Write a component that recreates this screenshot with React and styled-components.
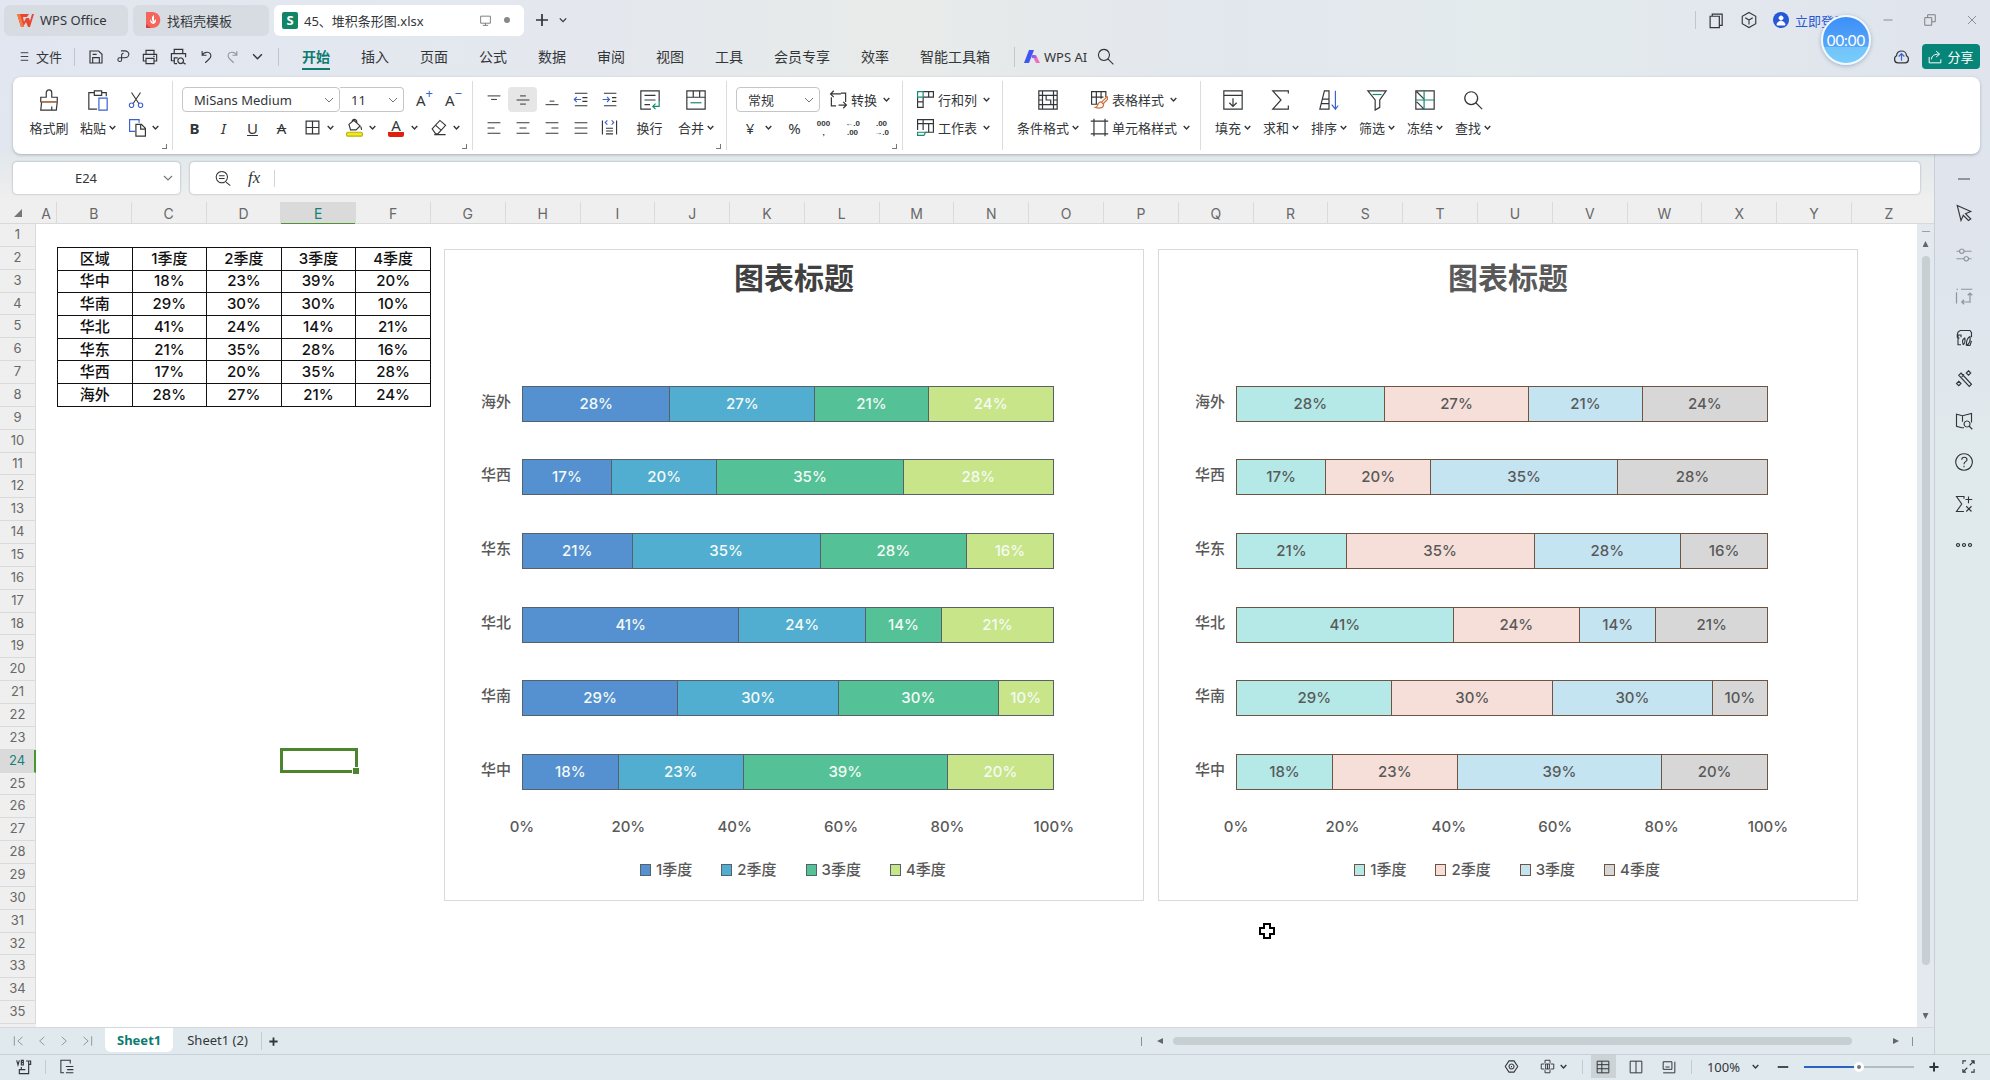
import React, { useState } from 'react'
import styled, { createGlobalStyle, css } from 'styled-components'

const QUARTERS = ['1季度', '2季度', '3季度', '4季度']

const REGIONS = [
  { name: '华中', label: ['18%', '23%', '39%', '20%'], share: [180, 235, 386, 199] },
  { name: '华南', label: ['29%', '30%', '30%', '10%'], share: [293, 303, 301, 103] },
  { name: '华北', label: ['41%', '24%', '14%', '21%'], share: [409, 238, 143, 210] },
  { name: '华东', label: ['21%', '35%', '28%', '16%'], share: [206, 355, 276, 163] },
  { name: '华西', label: ['17%', '20%', '35%', '28%'], share: [167, 198, 352, 283] },
  { name: '海外', label: ['28%', '27%', '21%', '24%'], share: [278, 273, 213, 236] },
]

const BLUE_THEME = {
  fills: ['#5591d1', '#52aed0', '#54c197', '#c8e589'],
  line: '#56616a',
  value: '#f4fbf6',
  title: '#404040',
}
const PASTEL_THEME = {
  fills: ['#b4e9e7', '#f6dfd9', '#c4e4f2', '#d7d7d7'],
  line: '#6f5442',
  value: '#595959',
  title: '#595959',
}

const COLUMNS = 'ABCDEFGHIJKLMNOPQRSTUVWXYZ'.split('')
const ROWS = Array.from({ length: 35 }, (_, i) => i + 1)
const MENUS = ['开始', '插入', '页面', '公式', '数据', '审阅', '视图', '工具', '会员专享', '效率', '智能工具箱']

// every drawing is in a 24 x 24 box
const ICONS = {
  menu: <path d="M5 5h14M5 12h14M5 19h14" />,
  save: <path d="M3 3h13l5 5v13H3zM7 21v-8h10v8M7 8h6" />,
  export: <path d="M8 3h6a6 5 0 0 1 0 11H9v3a3 3 0 1 1-3-3h3V9a3 3 0 0 1 3-2" />,
  print: <path d="M6 8V2h12v6M6 18H2V8h20v10h-4M6 14h12v8H6zM17 11h2" />,
  preview: <path d="M6 8V2h12v6M7 18H2V8h20v5M6 22V14h5M15 14a4 4 0 1 0 .1 0M18 20l4 3M6 22h4" />,
  undo: <path d="M5 3v7h7M5 10c4-7 14-6 14 1 0 4-4 6-9 11" />,
  redo: <path d="M19 3v7h-7M19 10C15 3 5 4 5 11c0 4 4 6 9 11" />,
  search: <path d="M10 3a7 7 0 1 0 .1 0M15 15l7 7" />,
  screen: <path d="M3 4h18v13H3zM12 17v4M7 21h10" />,
  plus: <path d="M12 3v18M3 12h18" />,
  minus: <path d="M3 12h18" />,
  docs: <path d="M3 6h13v16H3zM6 6V3h14v16h-4" />,
  cube: <path d="M12 2l9 5v10l-9 5-9-5V7zM7 9l5 3 5-3M12 12v6" />,
  restore: <path d="M3 8h12v13H3zM8 8V3h13v12h-6" />,
  close: <path d="M4 4l16 16M20 4L4 20" />,
  cloud: (
    <>
      <path d="M7 21C1 21 1 13 5 11c0-9 14-9 14 0 4 2 4 10-2 10z" />
      <path d="M12 18v-9M8 12l4-4 4 4" stroke="#3a62d0" />
    </>
  ),
  share: <path d="M2 12v10h20v-6M6 16c0-6 5-9 13-9M14 2l6 5-6 5" />,
  brush: (
    <>
      <path d="M9 9V4a3 3 0 0 1 6 0v5h6v5H3V9zM4 14L3 23h17l1-9M15 23v-4" />
      <path d="M3 14h18" stroke="#c87941" />
    </>
  ),
  paste: (
    <>
      <path d="M8 4H2v18h9M16 4h5v4M8 2h8v5H8z" />
      <path d="M13 10h9v13h-9z" stroke="#3a62d0" />
    </>
  ),
  cut: (
    <>
      <path d="M6 2l10 15M18 2L8 17" />
      <path d="M6 16a3 3 0 1 0 .1 0M18 16a3 3 0 1 0 .1 0" stroke="#3a62d0" />
    </>
  ),
  copy: (
    <>
      <path d="M9 17H2V2h12v4" stroke="#3a62d0" />
      <path d="M10 8h7l5 5v10H10zM16 8v6h6" />
    </>
  ),
  borders: <path d="M3 3h18v18H3zM12 3v18M3 12h18" />,
  fill: (
    <>
      <path d="M5 8l6-5 8 7-5 5H7zM9 5c0-5 6-4 6 1M20 11l1 4" />
      <rect x="2" y="18" width="20" height="5" rx="2" fill="#f4ea12" stroke="#b9b01a" />
    </>
  ),
  erase: <path d="M3 14L14 2l8 7-11 12H8zM8 9l8 7M6 22h16" />,
  top: <path d="M1 5h22M7 11h10" />,
  middle: <path d="M7 5h10M1 12h22M7 19h10" />,
  bottom: <path d="M8 14h8M1 20h22" />,
  left: <path d="M1 3h22M1 12h12M1 21h22" />,
  center: <path d="M1 3h22M6 12h12M1 21h22" />,
  right: <path d="M1 3h22M11 12h12M1 21h22" />,
  justify: <path d="M1 3h22M1 12h22M1 21h22" />,
  outdent: (
    <>
      <path d="M3 2h20M15 9h8M15 15h8M3 22h20" />
      <path d="M13 12H2M6 8l-4 4 4 4" stroke="#3a62d0" />
    </>
  ),
  indent: (
    <>
      <path d="M3 2h20M16 9h7M16 15h7M3 22h20" />
      <path d="M1 12h11M8 8l4 4-4 4" stroke="#3a62d0" />
    </>
  ),
  spread: (
    <>
      <path d="M2 2v20M22 2v20M7 13h10M7 17h10M7 21h10" />
      <path d="M9 2L6 5l3 3M15 2l3 3-3 3" stroke="#3a62d0" />
    </>
  ),
  wrap: (
    <>
      <path d="M22 13V2H2v20h11M6 7h12M6 12h12M6 17h6" />
      <path d="M22 13v6h-7M18 16l-3 3 3 3" stroke="#178a72" />
    </>
  ),
  merge: (
    <>
      <path d="M2 2h20v20H2zM2 9h20M9 2v7M16 2v7" />
      <path d="M6 15h12" stroke="#178a72" />
    </>
  ),
  convert: <path d="M6 1L2 5l4 4M2 5h13M3 9v11h6M18 23l4-4-4-4M22 19H12M21 15V4h-6" />,
  rowcol: (
    <>
      <path d="M9 2h13v7H9M16 2v7M2 9v13h7V9M2 15h7" />
      <path d="M2 2h7v7H2z" stroke="#178a72" />
    </>
  ),
  sheet: (
    <>
      <path d="M2 15V2h20v16H12M2 7h20M9 2v13M16 7v11" />
      <path d="M2 18h10l-2 4H2z" stroke="#178a72" />
    </>
  ),
  condition: <path d="M2 2h20v20H2zM6 2v20M18 2v20M2 7h4M2 12h4M2 17h4M18 7h4M18 12h4M18 17h4M6 7h12M6 17h12M10 7v5h5v5" />,
  tablestyle: (
    <>
      <path d="M10 18H2V2h18v7M2 9h15M8 2v16M14 2v9" />
      <path d="M22 8l-8 8M22 8v4l-6 6M14 15c-5 0-3 6-7 7 6 2 11 0 10-4z" stroke="#d0703a" />
    </>
  ),
  cellstyle: <path d="M5 1v22M19 1v22M1 4h22M1 20h22" />,
  fillcell: <path d="M2 2h20v20H2zM2 7h20M12 10v9M8 15l4 4 4-4" />,
  sum: <path d="M20 5V2H3l9 10-9 10h17v-4" />,
  sort: (
    <>
      <path d="M2 22L7 2h5v20zM5 11h7M4 16h8" />
      <path d="M19 2v20M15 17l4 5 3-4" stroke="#3a62d0" />
    </>
  ),
  filter: (
    <>
      <path d="M2 2h20l-7 10v8l-5 3V12z" />
      <path d="M7 6h10" stroke="#178a72" />
    </>
  ),
  freeze: (
    <>
      <path d="M2 2h20v20H2zM3 3l8 8M3 14l8 8" />
      <path d="M11 2v20M2 12h20" stroke="#178a72" />
    </>
  ),
  zoomed: <path d="M11 2a8 8 0 1 0 .1 0M17 17l6 5M7 8h8M7 12h8" />,
  pointer: <path d="M3 2l18 8-7 3 7 7-3 2-7-7-3 7z" />,
  sliders: <path d="M2 7h4M12 7h10M9 4a3 3 0 1 0 .1 0M2 17h10M18 17h4M15 14a3 3 0 1 0 .1 0" />,
  crop: <path d="M2 3h2M8 3h15M2 7v15M20 21V8M17 11l3-3 3 3M20 20H9M12 17l-3 3 3 3" />,
  chart: <path d="M8 11V8H3l1-4 3-2h13l2 3v6M4 8v13h4M6 8c-4 0-4 5 0 4M11 21c-2-5 0-8 2-9 1 4 0 7-2 9M15 22c0-8 3-11 5-12 1 6-1 10-5 12M15 22h5l2-6" />,
  magic: <path d="M8 4l14 15-3 3L5 7zM9 9l3-3M18 1l3 3-3 3-3-3zM5 15l3 3-3 3-3-3z" />,
  book: <path d="M9 21L2 19V3l8 2 12-3v12M10 5v8M16 12a4 4 0 1 0 .1 0M19 19l4 4M9 21h3" />,
  help: <path d="M12 1a11 11 0 1 0 .1 0M9 9c0-5 7-4 7 0 0 3-4 2-4 6M12 17v2" />,
  formula: <path d="M12 5V2H2l7 10-7 10h10M18 2v9M14 6h9M15 15l7 7M22 15l-7 7" />,
  more: <path d="M4 10a2 2 0 1 0 .1 0M12 10a2 2 0 1 0 .1 0M20 10a2 2 0 1 0 .1 0" />,
  first: <path d="M4 4v16M18 5l-8 7 8 7" />,
  prev: <path d="M16 5l-8 7 8 7" />,
  next: <path d="M8 5l8 7-8 7" />,
  last: <path d="M20 4v16M6 5l8 7-8 7" />,
  outline: <path d="M18 7V2H3v20h5M11 12h12M13 17h10M11 22h12" />,
  macro: <path d="M1 2l2 7 2-7M8 2h3v7H8zM8 5h3M8 15v-3M15 3h7v5h-3v14H5v-6h9M19 3v5" />,
  eye: <path d="M8 3h8l6 9-6 9H8l-6-9zM12 8a4 4 0 1 0 .1 0M12 11v2" />,
  layout: <path d="M8 7V2h8v5M17 8h5v8h-5M16 17v5H8v-5M7 16H2V8h5M9 8h6v8H9zM12 8v8" />,
  normal: <path d="M2 2h20v20H2zM2 8h20M2 15h20M10 2v20" />,
  pages: <path d="M2 2h20v20H2zM12 2v20" />,
  reading: <path d="M2 3h15v13H2zM22 3v19H2M6 12h7" />,
  full: <path d="M8 3H3v5M16 3h5v5M8 21H3v-5M16 21h5v-5M21 3l-7 7M3 21l7-7" />,
}

const Icon = ({ name, size = 20, weight = 1.7 }) => (
  <Drawing width={size} height={size} viewBox="0 0 24 24" strokeWidth={weight} aria-hidden="true">
    {ICONS[name]}
  </Drawing>
)

const Caret = ({ size = 7, weight = 2 }) => (
  <Drawing width={size} height={size} viewBox="0 0 10 10" strokeWidth={weight} aria-hidden="true">
    <path d="M1 3l4 4 4-4" />
  </Drawing>
)

const BigTool = ({ icon, label, width = 48, caret }) => (
  <BigButton $width={width}>
    <Icon name={icon} size={22} weight={1.3} />
    <Label>
      {label}
      {caret && <Caret />}
    </Label>
  </BigButton>
)

const WideTool = ({ icon, label }) => (
  <WideButton>
    <Icon name={icon} size={19} weight={1.5} />
    <Label>
      {label}
      <Caret />
    </Label>
  </WideButton>
)

const SplitTool = ({ title, children }) => (
  <SplitButton aria-label={title}>
    <SplitFace>{children}</SplitFace>
    <Caret />
  </SplitButton>
)

const Combo = ({ label, value, width, flat }) => (
  <ComboBox $width={width} $flat={flat}>
    <select aria-label={label} defaultValue={value}>
      <option>{value}</option>
    </select>
    <Caret size={10} weight={1} />
  </ComboBox>
)

const StackedChart = ({ theme: look, from, to, left, right }) => (
  <ChartFrame $from={from} $to={to} $left={left} $right={right}>
    <ChartTitle $color={look.title}>图表标题</ChartTitle>
    <Plot>
      {[...REGIONS].reverse().map((region) => (
        <BarRow key={region.name}>
          <Category>{region.name}</Category>
          <Bar $line={look.line}>
            {region.share.map((share, i) => (
              <Segment key={i} $fill={look.fills[i]} $line={look.line} $color={look.value} style={{ flexGrow: share }}>
                {region.label[i]}
              </Segment>
            ))}
          </Bar>
        </BarRow>
      ))}
    </Plot>
    <Axis>
      {['0%', '20%', '40%', '60%', '80%', '100%'].map((tick) => (
        <Tick key={tick}>{tick}</Tick>
      ))}
    </Axis>
    <Legend>
      {QUARTERS.map((quarter, i) => (
        <LegendItem key={quarter}>
          <Swatch $fill={look.fills[i]} $line={look.line} />
          {quarter}
        </LegendItem>
      ))}
    </Legend>
  </ChartFrame>
)

const App = () => {
  const [zoom, setZoom] = useState(50)

  return (
    <Window>
      <GlobalStyle />
      <TitleBar>
        <FileTab $width={124}>
          <svg width="18" height="16" viewBox="0 0 18 16" aria-hidden="true">
            <path d="M1 2h12l-2 3H7l1 5 2-4h3l1 3 2-7h2l-4 13h-2l-2-5-3 5H5z" fill="#e8472f" />
            <path d="M1 2h3l4 13H5z" fill="#f47a3c" />
          </svg>
          WPS Office
        </FileTab>
        <FileTab $width={136}>
          <svg width="16" height="18" viewBox="0 0 16 18" aria-hidden="true">
            <path d="M1 1h6c11 0 11 16 0 16H1z" fill="#f4655c" />
            <path d="M1 13l5 4H1z" fill="#d33f3c" />
            <path d="M5 8c0 7 7 6 6 0l-2 2V4C6 6 7 8 8 12z" fill="#fff" />
          </svg>
          找稻壳模板
        </FileTab>
        <FileTab $width={250} $active>
          <BookMark>S</BookMark>
          <FileName>45、堆积条形图.xlsx</FileName>
          <TabState><Icon name="screen" size={13} /></TabState>
          <Dot />
        </FileTab>
        <PlainButton aria-label="新建" $width={26}><Icon name="plus" size={16} weight={2.6} /></PlainButton>
        <PlainButton aria-label="标签列表" $width={16}><Caret size={8} weight={1.6} /></PlainButton>
        <Spacer />
        <TitleTools>
          <Icon name="docs" size={17} />
          <Icon name="cube" size={18} weight={1.5} />
          <Login href="#login">
            <svg width="17" height="17" viewBox="0 0 17 17" aria-hidden="true">
              <circle cx="8" cy="8" r="8" fill="#2557d6" />
              <path d="M8 4a2 2 0 1 0 .1 0M4 13c0-5 8-5 8 0z" fill="#fff" stroke="#fff" />
            </svg>
            立即登录
          </Login>
        </TitleTools>
        <WindowTools>
          <Icon name="minus" size={12} weight={1.6} />
          <Icon name="restore" size={14} weight={1.6} />
          <Icon name="close" size={12} weight={1.6} />
        </WindowTools>
      </TitleBar>

      <MenuBar>
        <FileMenu><Icon name="menu" size={13} /> 文件</FileMenu>
        <QuickTools>
          <Icon name="save" size={16} />
          <Icon name="export" size={15} />
          <Icon name="print" size={16} />
          <Icon name="preview" size={17} />
          <Icon name="undo" size={15} />
          <Faded><Icon name="redo" size={15} /></Faded>
          <Caret size={11} weight={1.3} />
        </QuickTools>
        <MenuTabs>
          {MENUS.map((menu, i) => (
            <MenuTab key={menu} $active={i === 0}>{menu}</MenuTab>
          ))}
        </MenuTabs>
        <AiButton>
          <svg width="16" height="14" viewBox="0 0 16 14" aria-hidden="true">
            <path d="M5 0h5L5 13H0z" fill="#3f56f0" />
            <path d="M8 5l4 0 4 8h-4z" fill="#f06ec2" />
            <path d="M7 5h4l2 3H8z" fill="#8a63f2" />
          </svg>
          WPS AI
        </AiButton>
        <PlainButton aria-label="搜索" $width={36}><Icon name="search" size={19} weight={1.4} /></PlainButton>
        <Spacer />
        <Icon name="cloud" size={17} />
        <ShareButton><Icon name="share" size={14} /> 分享</ShareButton>
      </MenuBar>

      <Ribbon>
        <Group $width={160} $left={11}>
          <BigTool icon="brush" label="格式刷" width={50} />
          <BigTool icon="paste" label="粘贴" caret />
          <Lines>
            <Line $left={5}><Icon name="cut" size={18} weight={1.5} /></Line>
            <Line $left={3}><SplitTool title="复制"><Icon name="copy" size={19} weight={1.5} /></SplitTool></Line>
          </Lines>
          <Corner />
        </Group>
        <Group $width={300} $left={7}>
          <Lines>
            <Line $left={2}>
              <Combo label="字体" value="MiSans Medium" width={158} />
              <Combo label="字号" value="11" width={64} flat />
              <Line $left={6}>
                <Cell aria-label="增大字号">A<Raised>+</Raised></Cell>
                <Cell aria-label="减小字号">A<Raised>−</Raised></Cell>
              </Line>
            </Line>
            <Line>
              <Cell $bold>B</Cell>
              <Cell $italic>I</Cell>
              <Cell $under>U</Cell>
              <Cell $strike>A</Cell>
              <Line $left={4}>
                <SplitTool title="边框"><Icon name="borders" size={17} /></SplitTool>
                <SplitTool title="填充颜色"><Icon name="fill" size={19} weight={1.5} /></SplitTool>
                <SplitTool title="字体颜色"><FontColor>A</FontColor></SplitTool>
                <SplitTool title="清除"><Icon name="erase" size={17} weight={1.6} /></SplitTool>
              </Line>
            </Line>
          </Lines>
          <Corner />
        </Group>
        <Group $width={254} $left={6}>
          <Lines>
            <Line>
              <Cell aria-label="顶端对齐"><Icon name="top" size={14} /></Cell>
              <Cell aria-label="垂直居中" $on><Icon name="middle" size={14} /></Cell>
              <Cell aria-label="底端对齐"><Icon name="bottom" size={14} /></Cell>
              <Cell aria-label="减少缩进"><Icon name="outdent" size={15} /></Cell>
              <Cell aria-label="增加缩进"><Icon name="indent" size={15} /></Cell>
            </Line>
            <Line>
              <Cell aria-label="左对齐"><Icon name="left" size={14} /></Cell>
              <Cell aria-label="居中"><Icon name="center" size={14} /></Cell>
              <Cell aria-label="右对齐"><Icon name="right" size={14} /></Cell>
              <Cell aria-label="两端对齐"><Icon name="justify" size={14} /></Cell>
              <Cell aria-label="分散对齐"><Icon name="spread" size={17} weight={1.6} /></Cell>
            </Line>
          </Lines>
          <BigTool icon="wrap" label="换行" width={51} />
          <BigTool icon="merge" label="合并" width={42} caret />
          <Corner />
        </Group>
        <Group $width={176} $left={9}>
          <Lines>
            <Line>
              <Combo label="数字格式" value="常规" width={84} />
              <Line $left={9}><WideTool icon="convert" label="转换" /></Line>
            </Line>
            <Line $left={2}>
              <SplitTool title="货币">¥</SplitTool>
              <Cell>%</Cell>
              <Cell aria-label="千位分隔"><Digits><span>000</span><span>,</span></Digits></Cell>
              <Cell aria-label="增加小数位"><Digits><span>←.0</span><span>.00</span></Digits></Cell>
              <Cell aria-label="减少小数位"><Digits><span>.00</span><span>→.0</span></Digits></Cell>
            </Line>
          </Lines>
          <Corner />
        </Group>
        <Group $width={100} $left={13}>
          <Lines>
            <WideTool icon="rowcol" label="行和列" />
            <WideTool icon="sheet" label="工作表" />
          </Lines>
        </Group>
        <Group $width={198} $left={8}>
          <BigTool icon="condition" label="条件格式" width={74} caret />
          <Lines>
            <Line $left={5}><WideTool icon="tablestyle" label="表格样式" /></Line>
            <Line $left={5}><WideTool icon="cellstyle" label="单元格样式" /></Line>
          </Lines>
        </Group>
        <Group $left={8}>
          <BigTool icon="fillcell" label="填充" caret />
          <BigTool icon="sum" label="求和" caret />
          <BigTool icon="sort" label="排序" caret />
          <BigTool icon="filter" label="筛选" caret />
          <BigTool icon="freeze" label="冻结" caret />
          <BigTool icon="search" label="查找" caret />
        </Group>
      </Ribbon>

      <Main>
        <Workbook>
          <FormulaRow>
            <NameBox>
              <input aria-label="名称框" defaultValue="E24" />
              <Caret size={10} weight={1.2} />
            </NameBox>
            <FormulaBox>
              <Icon name="zoomed" size={17} weight={1.5} />
              <Fx>fx</Fx>
              <input aria-label="编辑栏" />
            </FormulaBox>
          </FormulaRow>

          <ColumnHeads>
            <SelectAll><svg width="8" height="8" aria-hidden="true"><path d="M8 0v8H0z" fill="#777" /></svg></SelectAll>
            <ColumnGrid>
              {COLUMNS.map((column) => (
                <ColumnHead key={column} $on={column === 'E'}>{column}</ColumnHead>
              ))}
            </ColumnGrid>
          </ColumnHeads>

          <SheetBody>
            <RowHeads>
              {ROWS.map((row) => (
                <RowHead key={row} $on={row === 24}>{row}</RowHead>
              ))}
            </RowHeads>
            <Canvas>
              <DataTable>
                <tbody>
                  <tr>
                    <th scope="col">区域</th>
                    {QUARTERS.map((quarter) => <th key={quarter} scope="col">{quarter}</th>)}
                  </tr>
                  {REGIONS.map((region) => (
                    <tr key={region.name}>
                      <td>{region.name}</td>
                      {region.label.map((value, i) => <td key={i}>{value}</td>)}
                    </tr>
                  ))}
                </tbody>
              </DataTable>
              <ActiveCell />
              <StackedChart theme={BLUE_THEME} from={7} to={17} left={13} right={35} />
              <StackedChart theme={PASTEL_THEME} from={16} to={27} left={54} right={59} />
              <MouseCross width="16" height="16" viewBox="0 0 16 16" aria-hidden="true">
                <path d="M5 1h6v4h4v6h-4v4H5v-4H1V5h4z" fill="#fff" stroke="#000" strokeWidth="2" />
              </MouseCross>
            </Canvas>
            <VerticalScroll>
              <SplitMark />
              <Arrow $dir="up" />
              <VerticalThumb />
              <Arrow $dir="down" />
            </VerticalScroll>
          </SheetBody>

          <SheetTabs>
            <SheetNav>
              <Icon name="first" size={14} />
              <Icon name="prev" size={14} />
              <Icon name="next" size={14} />
              <Icon name="last" size={14} />
            </SheetNav>
            <SheetTab $active>Sheet1</SheetTab>
            <SheetTab>Sheet1 (2)</SheetTab>
            <AddSheet aria-label="新建工作表"><Icon name="plus" size={11} weight={4} /></AddSheet>
            <Spacer />
            <HorizontalScroll>
              <Stop />
              <Arrow $dir="left" />
              <HorizontalThumb />
              <Arrow $dir="right" />
              <Stop />
            </HorizontalScroll>
          </SheetTabs>
        </Workbook>

        <SideBar>
          <Faded><Icon name="minus" size={16} weight={3} /></Faded>
          <SideTools>
            <Icon name="pointer" size={18} weight={1.5} />
            <Faded><Icon name="sliders" size={18} weight={1.6} /></Faded>
            <Faded><Icon name="crop" size={18} weight={1.6} /></Faded>
            <Icon name="chart" size={18} weight={1.5} />
            <Icon name="magic" size={18} weight={1.5} />
            <Icon name="book" size={18} weight={1.5} />
            <Icon name="help" size={18} weight={1.5} />
            <Icon name="formula" size={18} weight={1.5} />
            <Icon name="more" size={18} weight={1.6} />
          </SideTools>
        </SideBar>
      </Main>

      <StatusBar>
        <StatusLeft>
          <Icon name="macro" size={16} />
          <Rule />
          <Icon name="outline" size={15} />
        </StatusLeft>
        <Spacer />
        <Icon name="eye" size={15} />
        <StatusPair><Icon name="layout" size={15} weight={1.5} /><Caret /></StatusPair>
        <Rule />
        <ViewButton aria-label="普通视图" $on><Icon name="normal" size={14} /></ViewButton>
        <ViewButton aria-label="分页预览"><Icon name="pages" size={14} /></ViewButton>
        <ViewButton aria-label="阅读视图"><Icon name="reading" size={14} /></ViewButton>
        <Rule />
        <ZoomValue>100%<Caret size={7} /></ZoomValue>
        <PlainButton aria-label="缩小" $width={18}><Icon name="minus" size={14} weight={3} /></PlainButton>
        <ZoomRange type="range" aria-label="缩放" value={zoom} onChange={(e) => setZoom(e.target.value)} />
        <PlainButton aria-label="放大" $width={18}><Icon name="plus" size={12} weight={4} /></PlainButton>
        <FullButton aria-label="全屏"><Icon name="full" size={15} /></FullButton>
      </StatusBar>

      <Timer>00:00</Timer>
    </Window>
  )
}

const GlobalStyle = createGlobalStyle`
  * {
    box-sizing: border-box;
  }
  body {
    margin: 0;
    color: #333639;
    font: 13px 'Noto Sans', 'Noto Sans CJK SC', sans-serif;
  }
  button, input, select {
    font: inherit;
    color: inherit;
    border: 0;
    padding: 0;
    margin: 0;
    background: none;
    outline: none;
  }
  button, a {
    cursor: pointer;
  }
  svg {
    flex: none;
  }
`

const UI_FONT = "'Noto Sans', 'Noto Sans CJK SC', sans-serif"
const CELL_FONT = "Inter, 'Noto Sans CJK SC', sans-serif"
const SHEET_COLUMNS = '21px repeat(24, minmax(0, 1fr)) 65px'
// the last column runs on above the scroll bar
const HEAD_COLUMNS = '21px repeat(24, minmax(0, 1fr)) 74px'
const SHEET_ROWS = 'repeat(35, minmax(0, 1fr)) 3px'

const Drawing = styled.svg`
  fill: none;
  stroke: currentColor;
`

const Window = styled.div`
  position: relative;
  display: flex;
  flex-direction: column;
  height: 100vh;
  overflow: hidden;
  font-family: ${UI_FONT};
  background:
    linear-gradient(180deg, transparent 60px, #e1e8eb 400px, #dfe9ee 100%),
    linear-gradient(90deg, #e2e6f0 0%, #e4e8ee 30%, #e8ebe9 45%, #e2e7ee 62%, #e4ebed 75%, #dfe4ed 100%);
`

const Spacer = styled.div`
  flex: 1;
`

const TitleBar = styled.header`
  display: flex;
  flex: none;
  align-items: center;
  height: 36px;
  padding: 4px 12px 0 4px;
`

const FileTab = styled.div`
  display: flex;
  align-items: center;
  gap: 6px;
  width: ${({ $width }) => $width}px;
  height: 31px;
  padding: 0 12px;
  margin-right: 5px;
  border-radius: 6px;
  white-space: nowrap;
  background: #d7dce3;
  ${({ $active }) =>
    $active &&
    css`
      padding: 0 14px 0 8px;
      background: #fff;
    `}
`

const BookMark = styled.span`
  width: 16px;
  height: 17px;
  border-radius: 2px;
  color: #fff;
  font-weight: 700;
  line-height: 16px;
  text-align: center;
  background: #118566;
`

const FileName = styled.span`
  flex: 1;
`

const TabState = styled.span`
  display: flex;
  color: #777;
`

const Dot = styled.span`
  width: 6px;
  height: 6px;
  margin-left: 6px;
  border-radius: 50%;
  background: #888;
`

const PlainButton = styled.button`
  display: flex;
  align-items: center;
  justify-content: center;
  width: ${({ $width }) => $width}px;
  height: 26px;
`

const TitleTools = styled.div`
  display: flex;
  align-items: center;
  gap: 15px;
  height: 18px;
  padding-left: 12px;
  margin-right: 35px;
  border-left: 1px solid #c2c6cc;
`

const Login = styled.a`
  display: flex;
  align-items: center;
  gap: 5px;
  color: #2557d6;
  text-decoration: none;
`

const WindowTools = styled.div`
  display: flex;
  align-items: center;
  justify-content: space-between;
  width: 96px;
  color: #777;
`

const MenuBar = styled.nav`
  display: flex;
  flex: none;
  align-items: center;
  height: 41px;
  padding: 0 10px 0 18px;
`

const FileMenu = styled.button`
  display: flex;
  align-items: center;
  gap: 5px;
  width: 57px;
  height: 18px;
  white-space: nowrap;
  border-right: 1px solid #c2c6cc;
`

const QuickTools = styled.div`
  display: flex;
  align-items: center;
  justify-content: space-between;
  width: 204px;
  height: 18px;
  padding: 0 15px 0 13px;
  border-right: 1px solid #c2c6cc;
`

const Faded = styled.span`
  display: flex;
  opacity: 0.45;
`

const MenuTabs = styled.div`
  display: flex;
  gap: 31px;
  padding: 0 24px 0 23px;
`

const MenuTab = styled.button`
  height: 27px;
  font-size: 14px;
  line-height: 23px;
  white-space: nowrap;
  border-top: 2px solid transparent;
  border-bottom: 2px solid transparent;
  ${({ $active }) =>
    $active &&
    css`
      color: #0c7c70;
      font-weight: 700;
      border-bottom-color: #0c7c70;
    `}
`

const AiButton = styled.button`
  display: flex;
  align-items: center;
  gap: 4px;
  height: 20px;
  padding-left: 9px;
  border-left: 1px solid #c2c6cc;
`

const ShareButton = styled.button`
  display: flex;
  align-items: center;
  justify-content: center;
  gap: 5px;
  width: 58px;
  height: 25px;
  margin-left: 12px;
  border-radius: 4px;
  color: #fff;
  background: #078579;
`

const Ribbon = styled.section`
  position: relative;
  z-index: 1;
  display: flex;
  flex: none;
  align-items: center;
  height: 77px;
  margin: 0 10px 0 13px;
  border-radius: 8px;
  background: #fff;
  box-shadow: 0 1px 3px rgba(60, 70, 80, 0.35);
`

const Group = styled.div`
  position: relative;
  display: flex;
  align-items: flex-start;
  height: 69px;
  padding: 6px 0 0 ${({ $left }) => $left}px;
  ${({ $width }) =>
    $width &&
    css`
      width: ${$width}px;
      border-right: 1px solid #dcdcdc;
    `}
`

const Corner = styled.span`
  position: absolute;
  right: 5px;
  bottom: 1px;
  width: 5px;
  height: 5px;
  border: solid #777;
  border-width: 0 1px 1px 0;
`

const Label = styled.span`
  display: flex;
  align-items: center;
  justify-content: center;
  gap: 3px;
  height: 26px;
  white-space: nowrap;
`

const BigButton = styled.button`
  display: flex;
  flex-direction: column;
  align-items: center;
  gap: 3px;
  width: ${({ $width }) => $width}px;
  padding-top: 2px;
`

const WideButton = styled.button`
  display: flex;
  align-items: center;
  gap: 3px;
  height: 25px;

  ${Label} {
    gap: 6px;
    height: 25px;
  }
`

const Lines = styled.div`
  display: flex;
  flex-direction: column;
  gap: 3px;
`

const Line = styled.div`
  display: flex;
  align-items: center;
  height: 25px;
  padding-left: ${({ $left = 0 }) => $left}px;
`

const Cell = styled.button`
  display: flex;
  align-items: center;
  justify-content: center;
  width: 29px;
  height: 25px;
  font-size: 15px;
  font-weight: ${({ $bold }) => ($bold ? 700 : 400)};
  font-style: ${({ $italic }) => ($italic ? 'italic' : 'normal')};
  text-decoration: ${({ $under, $strike }) => ($under ? 'underline' : $strike ? 'line-through' : 'none')};
  ${({ $on }) =>
    $on &&
    css`
      border-radius: 4px;
      background: #e6e6e6;
    `}
`

const Raised = styled.span`
  align-self: flex-start;
  color: #3a62d0;
  font-size: 13px;
  line-height: 13px;
`

const SplitButton = styled.button`
  display: flex;
  align-items: center;
  gap: 3px;
  width: 42px;
  height: 25px;
  font-size: 15px;
`

const SplitFace = styled.span`
  display: flex;
  justify-content: center;
  width: 24px;
`

const FontColor = styled.span`
  width: 16px;
  height: 19px;
  font-size: 15px;
  line-height: 14px;
  text-align: center;
  border-bottom: 5px solid #e0200f;
  border-radius: 2px;
`

const Digits = styled.span`
  display: flex;
  flex-direction: column;
  align-items: center;
  font: 700 8px/9px 'Liberation Sans', sans-serif;
`

const ComboBox = styled.div`
  display: flex;
  align-items: center;
  width: ${({ $width }) => $width}px;
  height: 25px;
  padding-right: 5px;
  border: 1px solid #c6c6c6;
  border-radius: ${({ $flat }) => ($flat ? '0 4px 4px 0' : '4px')};
  ${({ $flat }) => $flat && 'border-left: 0;'}

  svg {
    color: #777;
  }

  select {
    flex: 1;
    min-width: 0;
    height: 23px;
    padding-left: 11px;
    appearance: none;
  }
`

const Main = styled.div`
  display: flex;
  flex: 1;
  min-height: 0;
`

const Workbook = styled.main`
  display: flex;
  flex: 1;
  flex-direction: column;
  min-width: 0;
`

const FormulaRow = styled.div`
  display: flex;
  gap: 10px;
  height: 48px;
  padding: 8px 14px 8px 13px;
  background: linear-gradient(180deg, #e2e8ec, #efefee);
`

const NameBox = styled.div`
  display: flex;
  align-items: center;
  width: 167px;
  height: 32px;
  padding-right: 7px;
  border-radius: 4px;
  background: #fff;
  box-shadow: 0 0 2px rgba(60, 70, 80, 0.5);

  svg {
    color: #777;
  }

  input {
    flex: 1;
    min-width: 0;
    padding-right: 4px;
    text-align: center;
  }
`

const FormulaBox = styled.div`
  display: flex;
  flex: 1;
  align-items: center;
  height: 32px;
  padding-left: 24px;
  border-radius: 4px;
  background: #fff;
  box-shadow: 0 0 2px rgba(60, 70, 80, 0.5);

  input {
    flex: 1;
    height: 17px;
    padding-left: 8px;
    border-left: 1px solid #d4d4d4;
  }
`

const Fx = styled.i`
  width: 26px;
  margin: 0 0 0 17px;
  font: italic 17px 'Liberation Serif', serif;
`

const ColumnHeads = styled.div`
  display: flex;
  height: 22px;
  padding-right: 8px;
  color: #686868;
  background: #efefef;
  border-bottom: 1px solid #d9d9d9;
`

const SelectAll = styled.div`
  display: flex;
  align-items: center;
  justify-content: flex-end;
  width: 36px;
  padding-right: 14px;
`

const ColumnGrid = styled.div`
  display: grid;
  flex: 1;
  grid-template-columns: ${HEAD_COLUMNS};
`

const ColumnHead = styled.div`
  font: 14px/23px ${CELL_FONT};
  text-align: center;
  border-right: 1px solid #dadada;
  &:last-child {
    border-right: 0;
  }
  ${({ $on }) =>
    $on &&
    css`
      color: #16807a;
      background: #dadada;
      box-shadow: inset 0 -2px #4d9433;
    `}
`

const SheetBody = styled.div`
  display: flex;
  flex: 1;
  min-height: 0;
`

const RowHeads = styled.div`
  display: grid;
  grid-template-rows: ${SHEET_ROWS};
  width: 36px;
  color: #686868;
  background: #efefef;
`

const RowHead = styled.div`
  font: 13px/20px ${CELL_FONT};
  text-align: center;
  border-bottom: 1px solid #dadada;
  border-right: 1px solid #dadada;
  ${({ $on }) =>
    $on &&
    css`
      color: #16807a;
      background: #dadada;
      border-right: 2px solid #4d9433;
    `}
`

const Canvas = styled.div`
  position: relative;
  display: grid;
  flex: 1;
  grid-template-columns: ${SHEET_COLUMNS};
  grid-template-rows: ${SHEET_ROWS};
  background: #fff;
  font-family: ${CELL_FONT};
`

const DataTable = styled.table`
  grid-row: 2 / 9;
  grid-column: 2 / 7;
  width: 100%;
  height: 100%;
  table-layout: fixed;
  border-collapse: collapse;
  color: #111;
  font-size: 15px;
  font-weight: 500;

  th, td {
    padding: 0;
    border: 1px solid #111;
    line-height: 18px;
    font-weight: 500;
    text-align: center;
  }
`

const ActiveCell = styled.div`
  position: relative;
  grid-row: 24;
  grid-column: 5;
  margin: -2px -2px 0 -1px;
  border: 3px solid #4c852e;

  &::after {
    content: '';
    position: absolute;
    right: -4px;
    bottom: -4px;
    width: 6px;
    height: 6px;
    border: solid #fff;
    border-width: 1px 0 0 1px;
    background: #4c852e;
  }
`

const ChartFrame = styled.figure`
  display: flex;
  flex-direction: column;
  grid-row: 2 / 31;
  grid-column: ${({ $from, $to }) => `${$from} / ${$to}`};
  margin: 2px ${({ $right }) => $right}px 9px ${({ $left }) => $left}px;
  padding: 8px 0 19px;
  border: 1px solid #d9d9d9;
  background: #fff;
  color: #595959;
  font-size: 15px;
  font-weight: 500;
`

const ChartTitle = styled.figcaption`
  height: 128px;
  color: ${({ $color }) => $color};
  font-size: 30px;
  font-weight: 700;
  line-height: 40px;
  text-align: center;
`

const Plot = styled.div`
  display: flex;
  flex: 1;
  flex-direction: column;
  justify-content: space-between;
  padding: 0 89px 0 36px;
`

const BarRow = styled.div`
  display: flex;
  gap: 10px;
`

const Category = styled.span`
  width: 31px;
  line-height: 32px;
  white-space: nowrap;
`

const Bar = styled.div`
  display: flex;
  flex: 1;
  height: 36px;
  border: 1px solid ${({ $line }) => $line};
`

const Segment = styled.div`
  flex: 1 1 0;
  min-width: 0;
  color: ${({ $color }) => $color};
  line-height: 33px;
  text-align: center;
  background: ${({ $fill }) => $fill};
  border-right: 1px solid ${({ $line }) => $line};
  &:last-child {
    border-right: 0;
  }
`

const Axis = styled.div`
  display: flex;
  justify-content: space-between;
  padding: 27px 64px 0 52px;
`

const Tick = styled.span`
  width: 50px;
  line-height: 20px;
  text-align: center;
`

const Legend = styled.div`
  display: flex;
  justify-content: center;
  gap: 29px;
  padding: 22px 2px 0 0;
`

const LegendItem = styled.span`
  display: flex;
  align-items: center;
  gap: 5px;
  line-height: 22px;
`

const Swatch = styled.i`
  width: 11px;
  height: 12px;
  border: 1px solid ${({ $line }) => $line};
  background: ${({ $fill }) => $fill};
`

const MouseCross = styled.svg`
  position: absolute;
  top: 87%;
  left: 65%;
`

const VerticalScroll = styled.div`
  display: flex;
  flex-direction: column;
  align-items: center;
  width: 17px;
  padding: 7px 0 8px;
  background: #e3e9ee;
`

const SplitMark = styled.i`
  width: 8px;
  height: 1px;
  margin-bottom: 9px;
  background: #9aa0a5;
`

const ARROWS = {
  up: 'polygon(50% 0, 100% 100%, 0 100%)',
  down: 'polygon(0 0, 100% 0, 50% 100%)',
  left: 'polygon(0 50%, 100% 0, 100% 100%)',
  right: 'polygon(0 0, 100% 50%, 0 100%)',
}

const Arrow = styled.i`
  flex: none;
  width: 6px;
  height: 6px;
  background: #666;
  clip-path: ${({ $dir }) => ARROWS[$dir]};
`

const VerticalThumb = styled.i`
  flex: 1;
  width: 8px;
  margin: 9px 0 48px;
  border-radius: 4px;
  background: #c8cfd3;
`

const SheetTabs = styled.div`
  display: flex;
  flex: none;
  align-items: flex-start;
  height: 27px;
  border-top: 1px solid #d3d9dc;
  background: #e0e9ed;
`

const SheetNav = styled.div`
  display: flex;
  align-items: center;
  justify-content: space-between;
  width: 105px;
  height: 26px;
  padding: 0 11px 0 12px;
  color: #92989c;
`

const SheetTab = styled.button`
  height: 24px;
  padding: 0 13px 0 14px;
  line-height: 24px;
  ${({ $active }) =>
    $active &&
    css`
      padding: 0 12px;
      border-radius: 0 0 6px 6px;
      color: #0c7c70;
      font-weight: 700;
      background: #fff;
    `}
`

const AddSheet = styled.button`
  display: flex;
  align-items: center;
  height: 18px;
  margin-top: 4px;
  padding-left: 6px;
  border-left: 1px solid #c6cdd1;
`

const HorizontalScroll = styled.div`
  display: flex;
  align-items: center;
  width: 41%;
  height: 26px;
  padding-right: 21px;
`

const Stop = styled.i`
  width: 1px;
  height: 9px;
  margin-right: 15px;
  background: #8a9094;
  &:last-child {
    margin: 0 0 0 13px;
  }
`

const HorizontalThumb = styled.i`
  flex: 1;
  height: 8px;
  margin: 0 41px 0 10px;
  border-radius: 4px;
  background: #c8cfd3;
`

const SideBar = styled.aside`
  display: flex;
  flex-direction: column;
  align-items: center;
  width: 56px;
  padding: 17px 0 0 2px;
  border-left: 1px solid #c8d0d5;
  background: linear-gradient(180deg, #e0e4ed, #dfe5ed 130px, #e0e9ec 300px);
`

const SideTools = styled.div`
  display: flex;
  flex-direction: column;
  align-items: center;
  justify-content: space-between;
  height: 350px;
  margin-top: 17px;
`

const StatusBar = styled.footer`
  display: flex;
  flex: none;
  align-items: center;
  height: 26px;
  padding: 0 14px 2px 0;
  border-top: 1px solid #c8d0d5;
  background: #e0e9ee;
`

const StatusLeft = styled.div`
  display: flex;
  align-items: center;
  gap: 13px;
  padding-left: 16px;
`

const Rule = styled.i`
  width: 1px;
  height: 14px;
  background: #c4cbd0;
`

const StatusPair = styled.span`
  display: flex;
  align-items: center;
  gap: 5px;
  margin: 0 15px 0 21px;
`

const ViewButton = styled.button`
  display: flex;
  align-items: center;
  justify-content: center;
  width: 25px;
  height: 23px;
  margin: 0 0 0 8px;
  background: ${({ $on }) => ($on ? '#cbd3d7' : 'none')};

  & + ${Rule} {
    margin-left: 9px;
  }
`

const ZoomValue = styled.span`
  display: flex;
  align-items: center;
  gap: 12px;
  margin: 0 15px 0 15px;
`

const ZoomRange = styled.input`
  width: 110px;
  height: 14px;
  margin: 0 11px 0 12px;
  appearance: none;

  &::-webkit-slider-runnable-track {
    height: 2px;
    background: linear-gradient(90deg, #2a63bf 50%, #b4bcc2 50%);
  }
  &::-webkit-slider-thumb {
    width: 10px;
    height: 10px;
    margin-top: -4px;
    border: 3px solid #fff;
    border-radius: 50%;
    background: #777;
    appearance: none;
  }
`

const FullButton = styled.button`
  display: flex;
  margin-left: 18px;
`

// floating recorder bubble
const Timer = styled.div`
  position: absolute;
  z-index: 2;
  top: 15px;
  right: 119px;
  width: 50px;
  height: 50px;
  border: 2px solid #f2f8ff;
  border-radius: 50%;
  color: #fff;
  font: 15px/47px Lato, sans-serif;
  text-align: center;
  background: linear-gradient(180deg, #3d8ff7 0, #55a6f9 64%, #72c3fa 65%, #78cdfb 100%);
  box-shadow: 0 1px 4px rgba(60, 90, 140, 0.4);
`

export default App
